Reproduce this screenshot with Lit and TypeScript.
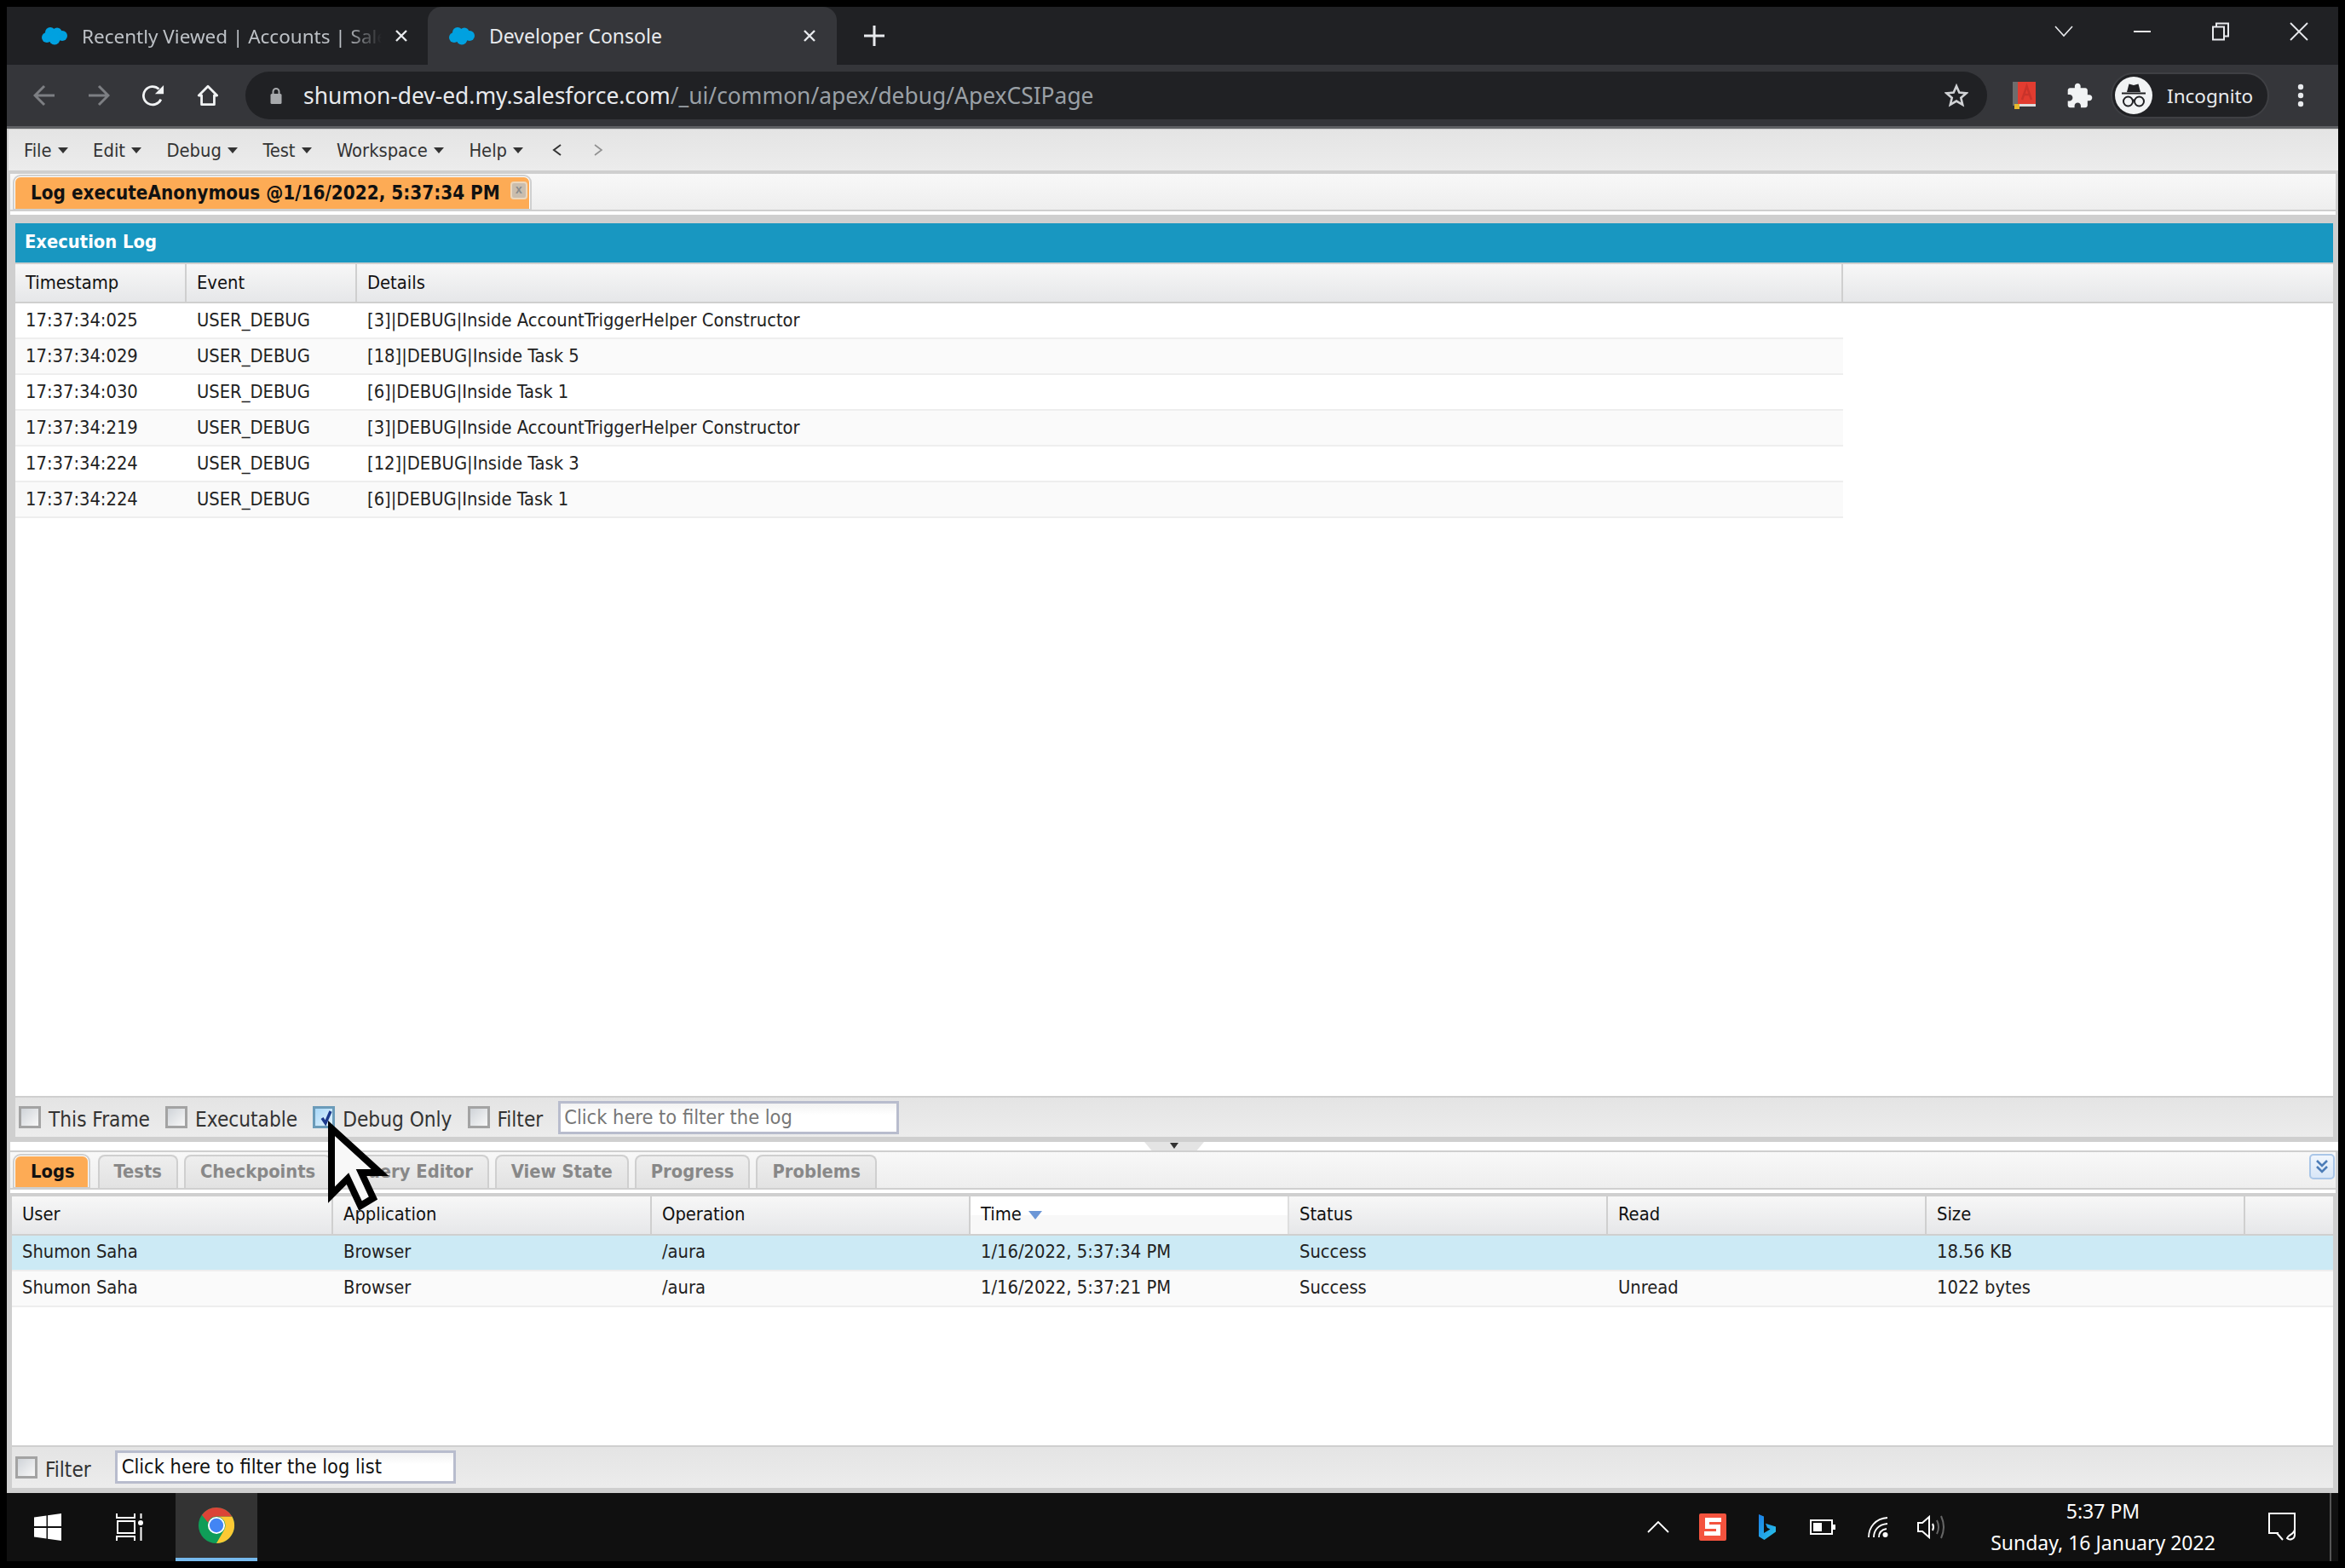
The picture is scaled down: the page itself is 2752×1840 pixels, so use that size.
import { LitElement, html, css, svg } from "lit";
import { customElement } from "lit/decorators.js";

const execRows = [
  ["17:37:34:025", "USER_DEBUG", "[3]|DEBUG|Inside AccountTriggerHelper Constructor"],
  ["17:37:34:029", "USER_DEBUG", "[18]|DEBUG|Inside Task 5"],
  ["17:37:34:030", "USER_DEBUG", "[6]|DEBUG|Inside Task 1"],
  ["17:37:34:219", "USER_DEBUG", "[3]|DEBUG|Inside AccountTriggerHelper Constructor"],
  ["17:37:34:224", "USER_DEBUG", "[12]|DEBUG|Inside Task 3"],
  ["17:37:34:224", "USER_DEBUG", "[6]|DEBUG|Inside Task 1"],
];

const logRows = [
  ["Shumon Saha", "Browser", "/aura", "1/16/2022, 5:37:34 PM", "Success", "", "18.56 KB"],
  ["Shumon Saha", "Browser", "/aura", "1/16/2022, 5:37:21 PM", "Success", "Unread", "1022 bytes"],
];

const menus = ["File", "Edit", "Debug", "Test", "Workspace", "Help"];
const bottomTabs = ["Tests", "Checkpoints", "Query Editor", "View State", "Progress", "Problems"];

const cloud = svg`<svg class="cloud" viewBox="0 0 30 22" width="30" height="22"><g fill="#00a1e0"><circle cx="10" cy="7" r="6"/><circle cx="18" cy="7" r="5.5"/><circle cx="24" cy="11" r="6"/><circle cx="6" cy="13" r="6"/><circle cx="15" cy="15" r="6.5"/></g></svg>`;

const closeX = svg`<svg viewBox="0 0 16 16" width="16" height="16"><path d="M2 2l12 12M14 2L2 14" stroke="#e8eaed" stroke-width="2.4" fill="none"/></svg>`;

@customElement("app-root")
export class AppRoot extends LitElement {
  static styles = css`
    :host {
      display: flex;
      flex-direction: column;
      width: 2752px;
      height: 1840px;
      box-sizing: border-box;
      padding: 8px;
      background: #000;
      font-family: "DejaVu Sans Condensed", "DejaVu Sans", sans-serif;
      font-stretch: condensed;
      font-size: 21.75px;
      color: #111;
      position: relative;
      overflow: hidden;
    }
    svg { display: block; flex: none; }

    /* browser chrome */
    .ui { font-family: "Noto Sans", sans-serif; font-stretch: normal; }
    .strip { height: 68px; background: #202124; display: flex; position: relative; flex: none; }
    .tab { display: flex; align-items: center; height: 68px; box-sizing: border-box; color: #e8eaed; font-size: 23px; }
    .tab.off { width: 494px; padding-left: 41px; color: #bdc1c6; font-size: 22.5px; }
    .tab.on { width: 480px; padding-left: 25px; background: #35363a; border-radius: 16px 16px 0 0; }
    .tab .cloud { margin-right: 17px; }
    .title { white-space: nowrap; }
    .tab.off .title { width: 360px; -webkit-mask-image: linear-gradient(90deg, #000 310px, transparent 352px); mask-image: linear-gradient(90deg, #000 310px, transparent 352px); }
    .tab.on .title { width: 368px; }
    .tab.off .x { margin-left: 7px; }
    .plus { margin-left: 31px; align-self: center; }
    .winbtns { margin-left: auto; display: flex; align-items: center; height: 58px; padding-right: 35px; gap: 70px; }

    .toolbar { height: 72px; background: #35363a; border-bottom: 3px solid #5f6164; display: flex; align-items: center; box-sizing: content-box; padding-left: 31px; flex: none; }
    .nav { display: flex; gap: 38px; align-items: center; margin-right: 31px; }
    .omni { width: 2044px; height: 56px; border-radius: 28px; background: #202124; display: flex; align-items: center; padding: 0 22px 0 29px; box-sizing: border-box; font-size: 26.4px; color: #e8eaed; }
    .omni .url { margin-left: 25px; white-space: nowrap; flex: 1; }
    .omni .path { color: #9aa0a6; }
    .ext { margin-left: 30px; }
    .puzzle { margin-left: 37px; }
    .pill { margin-left: 21px; width: 186px; height: 54px; box-sizing: border-box; border-radius: 27px; border: 2px solid #3f4044; background: #202124; display: flex; align-items: center; padding-left: 3px; color: #e8eaed; font-size: 22.5px; }
    .pill span { margin-left: 17px; }
    .dots { margin-left: 33px; }

    /* developer console */
    .page { flex: 1; display: flex; flex-direction: column; background: #cfcfcf; padding: 1px 0 0 2px; min-height: 0; }
    .menu { height: 48px; flex: none; display: flex; align-items: center; padding-left: 18px; gap: 29.5px; background: linear-gradient(#e4e4e4, #ececec); color: #333; }
    .menu .item { display: flex; align-items: center; gap: 7px; }
    .caret { width: 0; height: 0; border: 6px solid transparent; border-top: 7px solid #333; border-bottom: 0; }
    .menu .arrows { display: flex; gap: 34px; margin-left: 3px; }
    .menu .arrows svg:last-child { opacity: 0.6; }

    .tabs { height: 44px; flex: none; margin: 4px 3px 0 2px; box-sizing: border-box; display: flex; align-items: flex-end; background: linear-gradient(#f8f8f8, #eeeeee); border-bottom: 2px solid #cfcfcf; padding-left: 4px; gap: 7px; position: relative; }
    .ctab { height: 40px; box-sizing: border-box; border: 2px solid #cfcfcf; border-bottom: 0; border-radius: 8px 8px 0 0; padding: 0 17px 2px; display: flex; align-items: center; font-weight: 700; color: #888; background: linear-gradient(#eeeeee, #e2e2e2); white-space: nowrap; }
    .ctab.on { color: #111; background: #fdab55; border: 2px solid #fff; border-bottom: 0; outline: 2px solid #cfcfcf; outline-offset: -1px; padding: 0 15px 2px 18px; margin-right: 3px; }
    .ctab.big { font-size: 22.3px; padding-right: 2px; margin-right: 0; }
    .xbtn { width: 20px; height: 21px; box-sizing: border-box; margin: -6px 0 0 12px; background: #c9bdae; border: 2px solid #ecd7bc; border-radius: 4px; color: #8b8b8b; font-size: 14px; line-height: 15px; text-align: center; font-family: "Liberation Sans", sans-serif; }
    .gapw { height: 4px; flex: none; background: #fff; margin: 0 3px 0 2px; }
    .gapg { height: 8px; flex: none; }

    .exec { flex: none; height: 1074px; display: flex; flex-direction: column; margin: 0 6px 0 8px; }
    .blue { height: 46px; margin-top: 2px; flex: none; background: #1897c1; color: #fff; font-weight: 700; display: flex; align-items: center; padding: 0 0 4px 11px; box-sizing: border-box; }
    .head { display: grid; flex: none; height: 46px; margin-top: 2px; box-sizing: border-box; border-bottom: 2px solid #cfcfcf; background: linear-gradient(#f7f7f7, #e6e7e9); }
    .head > div { display: flex; align-items: center; padding: 0 0 2px 12px; border-right: 2px solid #cfcfcf; }
    .head > div:last-child { border-right: 0; }
    .head > div.sorted { background: linear-gradient(#fff 50%, #f8f8f8 50%); border-right-color: #dedede; }
    .sortarrow { width: 0; height: 0; border: 8px solid transparent; border-top: 10px solid #6b96d6; border-bottom: 0; margin: 3px 0 0 8px; }
    .e-cols { grid-template-columns: 201px 200px 1744px 1fr; }
    .body { flex: 1; min-height: 0; background: #fff; }
    .row { display: grid; height: 42px; box-sizing: border-box; border-bottom: 2px solid #eeeeee; align-items: center; background: #fafafa; color: #222; padding-bottom: 2px; }
    .row:nth-child(odd) { background: #fff; }
    .row > div { padding-left: 12px; white-space: nowrap; }
    .exec .row { width: 2145px; grid-template-columns: 201px 200px 1fr; }

    .fbar { display: flex; align-items: center; flex: none; height: 46px; margin-top: 2px; background: linear-gradient(#e4e4e4, #ececec); color: #333; font-size: 24.2px; box-sizing: border-box; }
    .check { width: 26px; height: 26px; box-sizing: border-box; border: 3px solid #a3a3a3; background: linear-gradient(135deg, #cfd3d8, #f8f8f8); flex: none; position: relative; }
    .check.on { border-color: #6b9bb9; background: linear-gradient(135deg, #a9d8f8, #e4f3fd); }
    .check.on svg { position: absolute; left: 3px; top: 1px; }
    .lab { margin: 6px 18px 0 9px; white-space: nowrap; }
    .field { box-sizing: border-box; height: 39px; width: 400px; border: 3px solid #b8bccd; background: linear-gradient(#f2f2f2, #fff 40%); padding-left: 4px; display: flex; align-items: center; white-space: nowrap; font-size: 23.4px; }
    .f1 { padding-left: 4px; }
    .f1 .field { color: #777; }
    .f2 { padding-left: 4px; height: 48px; }
    .f2 .lab { margin-right: 28px; }
    .f2 .field { color: #111; margin-top: -2px; padding-left: 5px; }

    .split { height: 16px; flex: none; background: #cfcfcf; position: relative; margin-left: 2px; }
    .split .white { height: 10px; margin-top: 6px; background: #fff; display: flex; justify-content: center; position: absolute; left: 0; right: 0; top: 0; }
    .handle { width: 70px; height: 10px; background: #e4e4e4; clip-path: polygon(0 0, 100% 0, 88% 100%, 12% 100%); display: flex; justify-content: center; }
    .handle i { width: 0; height: 0; border: 5px solid transparent; border-top: 7px solid #333; border-bottom: 0; margin-top: 1px; }

    .logs { flex: 1; min-height: 0; display: flex; flex-direction: column; margin: 2px 6px 0 2px; }
    .logs .tabs { margin: 0 -3px 0 0; }
    .logs .ctab { height: 39px; }
    .collapse { position: absolute; right: 1px; top: 2px; width: 30px; height: 30px; box-sizing: border-box; border: 2px solid #a9c6e8; border-radius: 5px; background: linear-gradient(#f0f6fd, #d8e6f7); display: flex; align-items: center; justify-content: center; }
    .lgap { height: 4px; flex: none; background: #fff; margin-right: -3px; }
    .logs .head { margin-top: 4px; margin-left: 2px; height: 46px; }
    .logs .head > div { padding-bottom: 4px; }
    .l-cols { grid-template-columns: 377px repeat(6, 374px) 1fr; }
    .logs .body { margin-left: 2px; }
    .logs .row { grid-template-columns: 377px repeat(6, 374px) 1fr; padding-bottom: 4px; }
    .logs .row:nth-child(odd) { background: #cceaf5; }
    .logs .fbar { margin-left: 2px; }
    .pagebottom { height: 6px; flex: none; }

    /* taskbar */
    .taskbar { height: 80px; background: #101010; flex: none; display: flex; align-items: center; color: #fff; }
    .win { margin-left: 32px; }
    .tview { margin-left: 64px; }
    .chrome { margin-left: 38px; width: 96px; height: 80px; box-sizing: border-box; background: #333; border-bottom: 4px solid #76b9ed; display: flex; align-items: center; justify-content: center; }
    .tray { margin-left: auto; display: flex; align-items: center; height: 100%; }
    .clock { margin-left: 54px; width: 264px; display: flex; flex-direction: column; align-items: center; font-size: 23px; line-height: 37px; white-space: nowrap; }
    .notif { margin-left: 62px; }
    .edge { width: 2px; height: 80px; background: #555; margin-left: 40px; margin-right: 8px; }

    .cursor { position: absolute; left: 378px; top: 1312px; }
  `;

  private _renderFilter() {
    return html`
      <div class="fbar f1">
        <div class="check"></div><span class="lab">This Frame</span>
        <div class="check"></div><span class="lab">Executable</span>
        <div class="check on">
          <svg viewBox="0 0 20 20" width="20" height="20"><path d="M5 10l4 6 6-14" stroke="#1c3a8c" stroke-width="3.4" fill="none"/></svg>
        </div><span class="lab">Debug Only</span>
        <div class="check"></div><span class="lab">Filter</span>
        <div class="field">Click here to filter the log</div>
      </div>`;
  }

  private _renderChrome() {
    return html`
      <div class="strip ui">
        <div class="tab off">
          ${cloud}<span class="title">Recently Viewed | Accounts | Sale</span><span class="x">${closeX}</span>
        </div>
        <div class="tab on">
          ${cloud}<span class="title">Developer Console</span><span class="x">${closeX}</span>
        </div>
        <svg class="plus" viewBox="0 0 26 26" width="26" height="26"><path d="M13 1v24M1 13h24" stroke="#e8eaed" stroke-width="3"/></svg>
        <div class="winbtns">
          <svg viewBox="0 0 22 14" width="22" height="14"><path d="M1 1l10 11L21 1" stroke="#e8eaed" stroke-width="1.6" fill="none"/></svg>
          <svg viewBox="0 0 22 4" width="22" height="4"><path d="M1 2h20" stroke="#e8eaed" stroke-width="2"/></svg>
          <svg viewBox="0 0 22 22" width="22" height="22"><path d="M6 5V1.5h14v15h-4M2 5.5h13v15H2z" stroke="#e8eaed" stroke-width="2" fill="none"/></svg>
          <svg viewBox="0 0 22 22" width="22" height="22"><path d="M1 1l20 20M21 1L1 21" stroke="#e8eaed" stroke-width="1.8" fill="none"/></svg>
        </div>
      </div>
      <div class="toolbar ui">
        <div class="nav">
          <svg viewBox="0 0 26 26" width="26" height="26"><path d="M25 13H2M13 2L2 13l11 11" stroke="#7d7f83" stroke-width="3" fill="none"/></svg>
          <svg viewBox="0 0 26 26" width="26" height="26"><path d="M1 13h23M13 2l11 11-11 11" stroke="#7d7f83" stroke-width="3" fill="none"/></svg>
          <svg viewBox="0 0 28 28" width="26" height="26"><path d="M23.5 19A11.5 11.5 0 1 1 21 6" stroke="#f1f3f4" stroke-width="3" fill="none"/><path d="M27 1v11H16z" fill="#f1f3f4"/></svg>
          <svg viewBox="0 0 28 28" width="26" height="26"><path d="M14 2.500L2.500 14H6v11.500h16V14h3.500z" stroke="#f1f3f4" stroke-width="3" fill="none" stroke-linejoin="round"/></svg>
        </div>
        <div class="omni">
          <svg viewBox="0 0 14 20" width="14" height="20"><path d="M3.500 8V5.500a3.500 3.500 0 0 1 7 0V8" stroke="#a7a9ac" stroke-width="2" fill="none"/><rect x="0.5" y="8" width="13" height="12" rx="1.5" fill="#a7a9ac"/></svg>
          <span class="url">shumon-dev-ed.my.salesforce.com<span class="path">/_ui/common/apex/debug/ApexCSIPage</span></span>
          <svg viewBox="0 0 28 28" width="28" height="28"><path d="M14 3l3.300 7.600 8.200.8-6.200 5.400 1.900 8.100L14 20.600 6.800 24.900l1.900-8.100L2.500 11.400l8.200-.8z" stroke="#d0d2d5" stroke-width="2.600" fill="none"/></svg>
        </div>
        <svg class="ext" viewBox="0 0 27 32" width="27" height="32">
          <rect x="0" y="0" width="8" height="28" fill="#6d6d6d"/><rect x="6" y="0" width="21" height="26" fill="#e23c30"/>
          <path d="M11 21L16.500 5 22 21M13 15h7" stroke="#c9332a" stroke-width="2.500" fill="none"/>
          <rect x="8" y="26" width="19" height="3" fill="#ddd"/><rect x="2" y="26" width="6" height="6" fill="#e8b92e"/>
        </svg>
        <svg class="puzzle" viewBox="1.500 .500 22 22" width="30" height="30"><path fill="#f1f3f4" d="M20.500 11H19V7c0-1.100-.9-2-2-2h-4V3.500C13 2.120 11.880 1 10.500 1S8 2.120 8 3.500V5H4c-1.100 0-1.990.9-1.990 2v3.800H3.500c1.490 0 2.700 1.210 2.700 2.700s-1.210 2.700-2.700 2.700H2V20c0 1.100.9 2 2 2h3.800v-1.500c0-1.490 1.210-2.700 2.700-2.700 1.490 0 2.700 1.210 2.700 2.700V22H17c1.100 0 2-.9 2-2v-4h1.500c1.380 0 2.500-1.120 2.500-2.500S21.880 11 20.500 11z"/></svg>
        <div class="pill">
          <svg viewBox="0 0 44 44" width="44" height="44">
            <circle cx="22" cy="22" r="22" fill="#f1f3f4"/>
            <path d="M14 18l2.500-9.500 5.500 1.500 5.500-1.500L30 18z" fill="#202124"/>
            <path d="M8 19.500h28" stroke="#202124" stroke-width="2"/>
            <circle cx="15.500" cy="29" r="5.500" stroke="#202124" stroke-width="2" fill="none"/>
            <circle cx="28.500" cy="29" r="5.500" stroke="#202124" stroke-width="2" fill="none"/>
            <path d="M21 28q1-1 2 0" stroke="#202124" stroke-width="2" fill="none"/>
          </svg>
          <span>Incognito</span>
        </div>
        <svg class="dots" viewBox="0 0 8 28" width="8" height="28"><circle cx="4" cy="4" r="3.200" fill="#e8eaed"/><circle cx="4" cy="14" r="3.200" fill="#e8eaed"/><circle cx="4" cy="24" r="3.200" fill="#e8eaed"/></svg>
      </div>`;
  }

  private _renderTaskbar() {
    return html`
      <div class="taskbar ui">
        <svg class="win" viewBox="0 0 32 32" width="32" height="32"><path fill="#fff" d="M0 4.500l14.500-2V15H0zM16 2.300L32 0v15H16zM0 17h14.500v12.500L0 27.500zM16 17h16v15l-16-2.200z"/></svg>
        <svg class="tview" viewBox="0 0 32 32" width="32" height="32"><path d="M1 0v5h21V0M2 9h20v14H2zM1 32v-5h21v5M29.500 0v6M29.500 16v16" stroke="#fff" stroke-width="2" fill="none"/><circle cx="29" cy="11" r="3" fill="#fff"/></svg>
        <div class="chrome">
          <svg viewBox="0 0 48 48" width="46" height="46">
            <circle cx="24" cy="24" r="22" fill="#0f9d58"/>
            <path d="M43.050 13A22 22 0 0 1 24 46l9.500-16.500A11 11 0 0 0 24 13z" fill="#fcc934"/>
            <path d="M24 2a22 22 0 0 1 19.050 11H24a11 11 0 0 0-10.400 7.400L6.200 11.300A22 22 0 0 1 24 2z" fill="#db4437"/>
            <circle cx="24" cy="24" r="10.500" fill="#fff"/><circle cx="24" cy="24" r="8.500" fill="#4285f4"/>
          </svg>
        </div>
        <div class="tray">
          <svg viewBox="0 0 26 14" width="26" height="14"><path d="M1 13L13 1l12 12" stroke="#fff" stroke-width="1.800" fill="none"/></svg>
          <svg style="margin-left:35px" viewBox="0 0 32 32" width="32" height="32">
            <rect width="32" height="32" rx="2" fill="#f4533e"/>
            <path d="M26 7.500H9.500v8h13v8H6" stroke="#fff" stroke-width="5" fill="none"/>
          </svg>
          <svg style="margin-left:38px" viewBox="0 0 20 30" width="20" height="30">
            <defs><linearGradient id="bing" x1="0" y1="0" x2="1" y2="1"><stop offset="0" stop-color="#1b7fe8"/><stop offset="1" stop-color="#29c5e8"/></linearGradient></defs>
            <path d="M0 0l6 2.500v19.500l7.500-4.500-3.500-1.700-2-5L20 14.500v6L6.500 30 0 26z" fill="url(#bing)"/>
          </svg>
          <svg style="margin-left:40px" viewBox="0 0 30 18" width="30" height="18"><rect x="1" y="1" width="25" height="16" fill="none" stroke="#fff" stroke-width="2"/><rect x="4" y="4" width="10" height="10" fill="#fff"/><rect x="27" y="6" width="3" height="6" fill="#fff"/></svg>
          <svg style="margin-left:38px" viewBox="0 0 24 24" width="24" height="24"><path d="M1 24C1 12 9 2 23 1M7 24c0-8 5-15 16-16M13 24c0-5 3-9 9-10" stroke="#fff" stroke-width="1.800" fill="none"/><circle cx="20.500" cy="21" r="3" fill="#fff"/></svg>
          <svg style="margin-left:34px" viewBox="0 0 32 28" width="32" height="28"><path d="M1 9v10h5l8 7V2L6 9z" stroke="#fff" stroke-width="2" fill="none"/><path d="M18 10q2 4 0 8" stroke="#fff" stroke-width="2" fill="none"/><path d="M23 6q4 8 0 16M28 1q6 13 0 26" stroke="#666" stroke-width="2" fill="none"/></svg>
          <div class="clock"><span>5:37 PM</span><span>Sunday, 16 January 2022</span></div>
          <svg class="notif" viewBox="0 0 32 34" width="32" height="34"><path d="M12 24H1V1h30v24" stroke="#fff" stroke-width="2" fill="none"/><path d="M10 24l7 8M31 20c-1 6-8 6-9 10 3 3 9 1 9-4z" stroke="#fff" stroke-width="2" fill="none"/></svg>
          <div class="edge"></div>
        </div>
      </div>`;
  }

  render() {
    return html`
      ${this._renderChrome()}
      <div class="page">
        <div class="menu">
          ${menus.map((m) => html`<div class="item">${m}<span class="caret"></span></div>`)}
          <div class="arrows">
            <svg viewBox="0 0 14 20" width="14" height="20"><path d="M11 4l-8 6 8 6" stroke="#333" stroke-width="2" fill="none"/></svg>
            <svg viewBox="0 0 14 20" width="14" height="20"><path d="M3 4l8 6-8 6" stroke="#555" stroke-width="1.600" fill="none"/></svg>
          </div>
        </div>
        <div class="tabs">
          <div class="ctab on big">Log executeAnonymous @1/16/2022, 5:37:34 PM<span class="xbtn">x</span></div>
        </div>
        <div class="gapw"></div>
        <div class="gapg"></div>
        <div class="exec">
          <div class="blue">Execution Log</div>
          <div class="head e-cols"><div>Timestamp</div><div>Event</div><div>Details</div><div></div></div>
          <div class="body">
            ${execRows.map((r) => html`<div class="row">${r.map((c) => html`<div>${c}</div>`)}</div>`)}
          </div>
          ${this._renderFilter()}
        </div>
        <div class="split"><div class="white"><div class="handle"><i></i></div></div></div>
        <div class="logs">
          <div class="tabs">
            <div class="ctab on">Logs</div>
            ${bottomTabs.map((t) => html`<div class="ctab">${t}</div>`)}
            <div class="collapse">
              <svg viewBox="0 0 16 18" width="16" height="18"><path d="M2 2l6 6 6-6M2 9l6 6 6-6" stroke="#4d7db8" stroke-width="2.600" fill="none"/></svg>
            </div>
          </div>
          <div class="lgap"></div>
          <div class="head l-cols">
            <div>User</div><div>Application</div><div>Operation</div>
            <div class="sorted">Time<span class="sortarrow"></span></div>
            <div>Status</div><div>Read</div><div>Size</div><div></div>
          </div>
          <div class="body">
            ${logRows.map((r) => html`<div class="row">${r.map((c) => html`<div>${c}</div>`)}</div>`)}
          </div>
          <div class="fbar f2">
            <div class="check"></div><span class="lab">Filter</span>
            <div class="field">Click here to filter the log list</div>
          </div>
          <div class="pagebottom"></div>
        </div>
      </div>
      ${this._renderTaskbar()}
      <svg class="cursor" viewBox="0 0 80 116" width="80" height="116">
        <path d="M11 12v78l19-19 15 32 15-9-14-30h22z" fill="#f8f8f8" stroke="#000" stroke-width="8"/>
      </svg>
    `;
  }
}
